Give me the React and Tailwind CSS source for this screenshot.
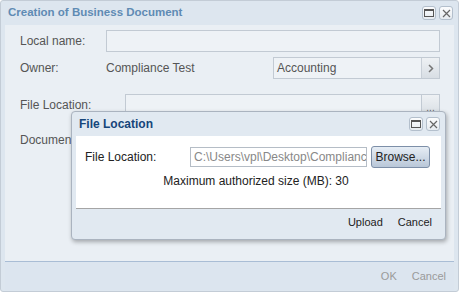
import React from 'react';

const font = { fontFamily: '"Liberation Sans", Arial, sans-serif' };

const WinButton = ({ kind }) => (
  <div className="w-[14px] h-[14px] rounded-[3px] border border-[#b3bfcc] bg-gradient-to-b from-[#fbfcfd] to-[#e6ebf0] flex items-center justify-center">
    {kind === 'max' ? (
      <svg width="10" height="8" viewBox="0 0 10 8">
        <rect x="0.5" y="0.5" width="9" height="7" fill="none" stroke="#555" />
        <rect x="0" y="0" width="10" height="2" fill="#555" />
      </svg>
    ) : (
      <svg width="9" height="9" viewBox="0 0 9 9">
        <path d="M1 1 L8 8 M8 1 L1 8" stroke="#666" strokeWidth="1.2" />
      </svg>
    )}
  </div>
);

const FileDialog = () => (
  <div className="absolute left-[71px] top-[111px] w-[375px] h-[129px] rounded-[4px] border border-[#aab3bf] bg-[#e1e9f1] shadow-[1px_2px_4px_rgba(0,0,0,0.3)] flex flex-col px-[4px] pb-[3px]">
    {/* title */}
    <div className="h-[24px] flex items-center justify-between pl-[3px] pr-[1px]">
      <span className="text-[12px] font-bold text-[#15457a]">File Location</span>
      <div className="flex gap-[3px]">
        <WinButton kind="max" />
        <WinButton kind="close" />
      </div>
    </div>
    {/* body */}
    <div className="h-[73px] bg-white border-b border-[#a5a5a5] pt-[10px] flex flex-col">
      <div className="flex items-center pl-[9px]">
        <span className="w-[105px] text-[12px] text-[#222]">File Location:</span>
        <div className="w-[177px] h-[20px] border border-[#b5bdc6] pl-[3px] text-[12px] text-[#888] leading-[18px] overflow-hidden whitespace-nowrap">
          C:\Users\vpl\Desktop\Compliance
        </div>
        <div className="ml-[4px] w-[59px] h-[22px] rounded-[3px] border border-[#7d8fa8] bg-gradient-to-b from-[#e6edf5] to-[#b9c7d8] text-[12px] text-[#222] flex items-center justify-center">
          Browse...
        </div>
      </div>
      <div className="mt-[4px] text-center text-[12px] text-[#222] pr-[5px]">
        Maximum authorized size (MB): 30
      </div>
    </div>
    {/* footer */}
    <div className="flex-1 flex items-center justify-end gap-[15px] pr-[9px] text-[11px] text-[#222]">
      <span>Upload</span>
      <span>Cancel</span>
    </div>
  </div>
);

export default function App() {
  return (
    <div style={font} className="relative w-[459px] h-[292px] bg-white">
      <div className="w-[459px] h-[292px] border border-[#c3ccd6] rounded-[3px] bg-[#dde6ef] flex flex-col px-[4px] pb-[1px]">
        {/* title bar */}
        <div className="h-[24px] flex items-center justify-between pl-[3px] pr-[1px]">
          <span className="text-[11.5px] font-bold text-[#5f8bb4]">Creation of Business Document</span>
          <div className="flex gap-[3px]">
            <WinButton kind="max" />
            <WinButton kind="close" />
          </div>
        </div>
        {/* body */}
        <div className="flex-1 bg-[#eaeff4] pt-[5px] pl-[15px] pr-[14px] text-[12px] text-[#555]">
          <div className="flex items-center h-[22px]">
            <span className="w-[86px] shrink-0">Local name:</span>
            <div className="flex-1 h-[22px] border border-[#c2cad3] bg-[#eef2f6]" />
          </div>
          <div className="flex items-center h-[22px] mt-[5px]">
            <span className="w-[86px] shrink-0">Owner:</span>
            <span className="w-[167px] shrink-0 whitespace-nowrap">Compliance Test</span>
            <div className="flex-1 h-[22px] border border-[#c2cad3] bg-[#eef2f6] flex items-center">
              <span className="flex-1 pl-[3px] text-[#555]">Accounting</span>
              <div className="w-[18px] h-full border-l border-[#c8cfd7] bg-gradient-to-b from-[#eef1f4] to-[#d8dee4] flex items-center justify-center">
                <svg width="6" height="9" viewBox="0 0 6 9">
                  <path d="M1 1 L4.5 4.5 L1 8" fill="none" stroke="#777" strokeWidth="1.5" />
                </svg>
              </div>
            </div>
          </div>
          <div className="flex items-center h-[22px] mt-[15px]">
            <span className="w-[105px] shrink-0">File Location:</span>
            <div className="flex-1 h-[22px] border border-[#c2cad3] bg-[#eef2f6]" />
            <div className="w-[18px] h-[22px] border border-l-0 border-[#c2cad3] bg-gradient-to-b from-[#eef1f4] to-[#d8dee4] flex items-end justify-center pb-[2px] text-[10px] leading-none text-[#666]">
              ...
            </div>
          </div>
          <div className="mt-[15px]">Document:</div>
        </div>
        {/* footer */}
        <div className="h-[29px] border-t border-[#a9bdd5] bg-[#dce5ef] flex items-center justify-end gap-[15px] pr-[8px] text-[11px] text-[#9a9a9a]">
          <span>OK</span>
          <span>Cancel</span>
        </div>
      </div>
      <FileDialog />
    </div>
  );
}
